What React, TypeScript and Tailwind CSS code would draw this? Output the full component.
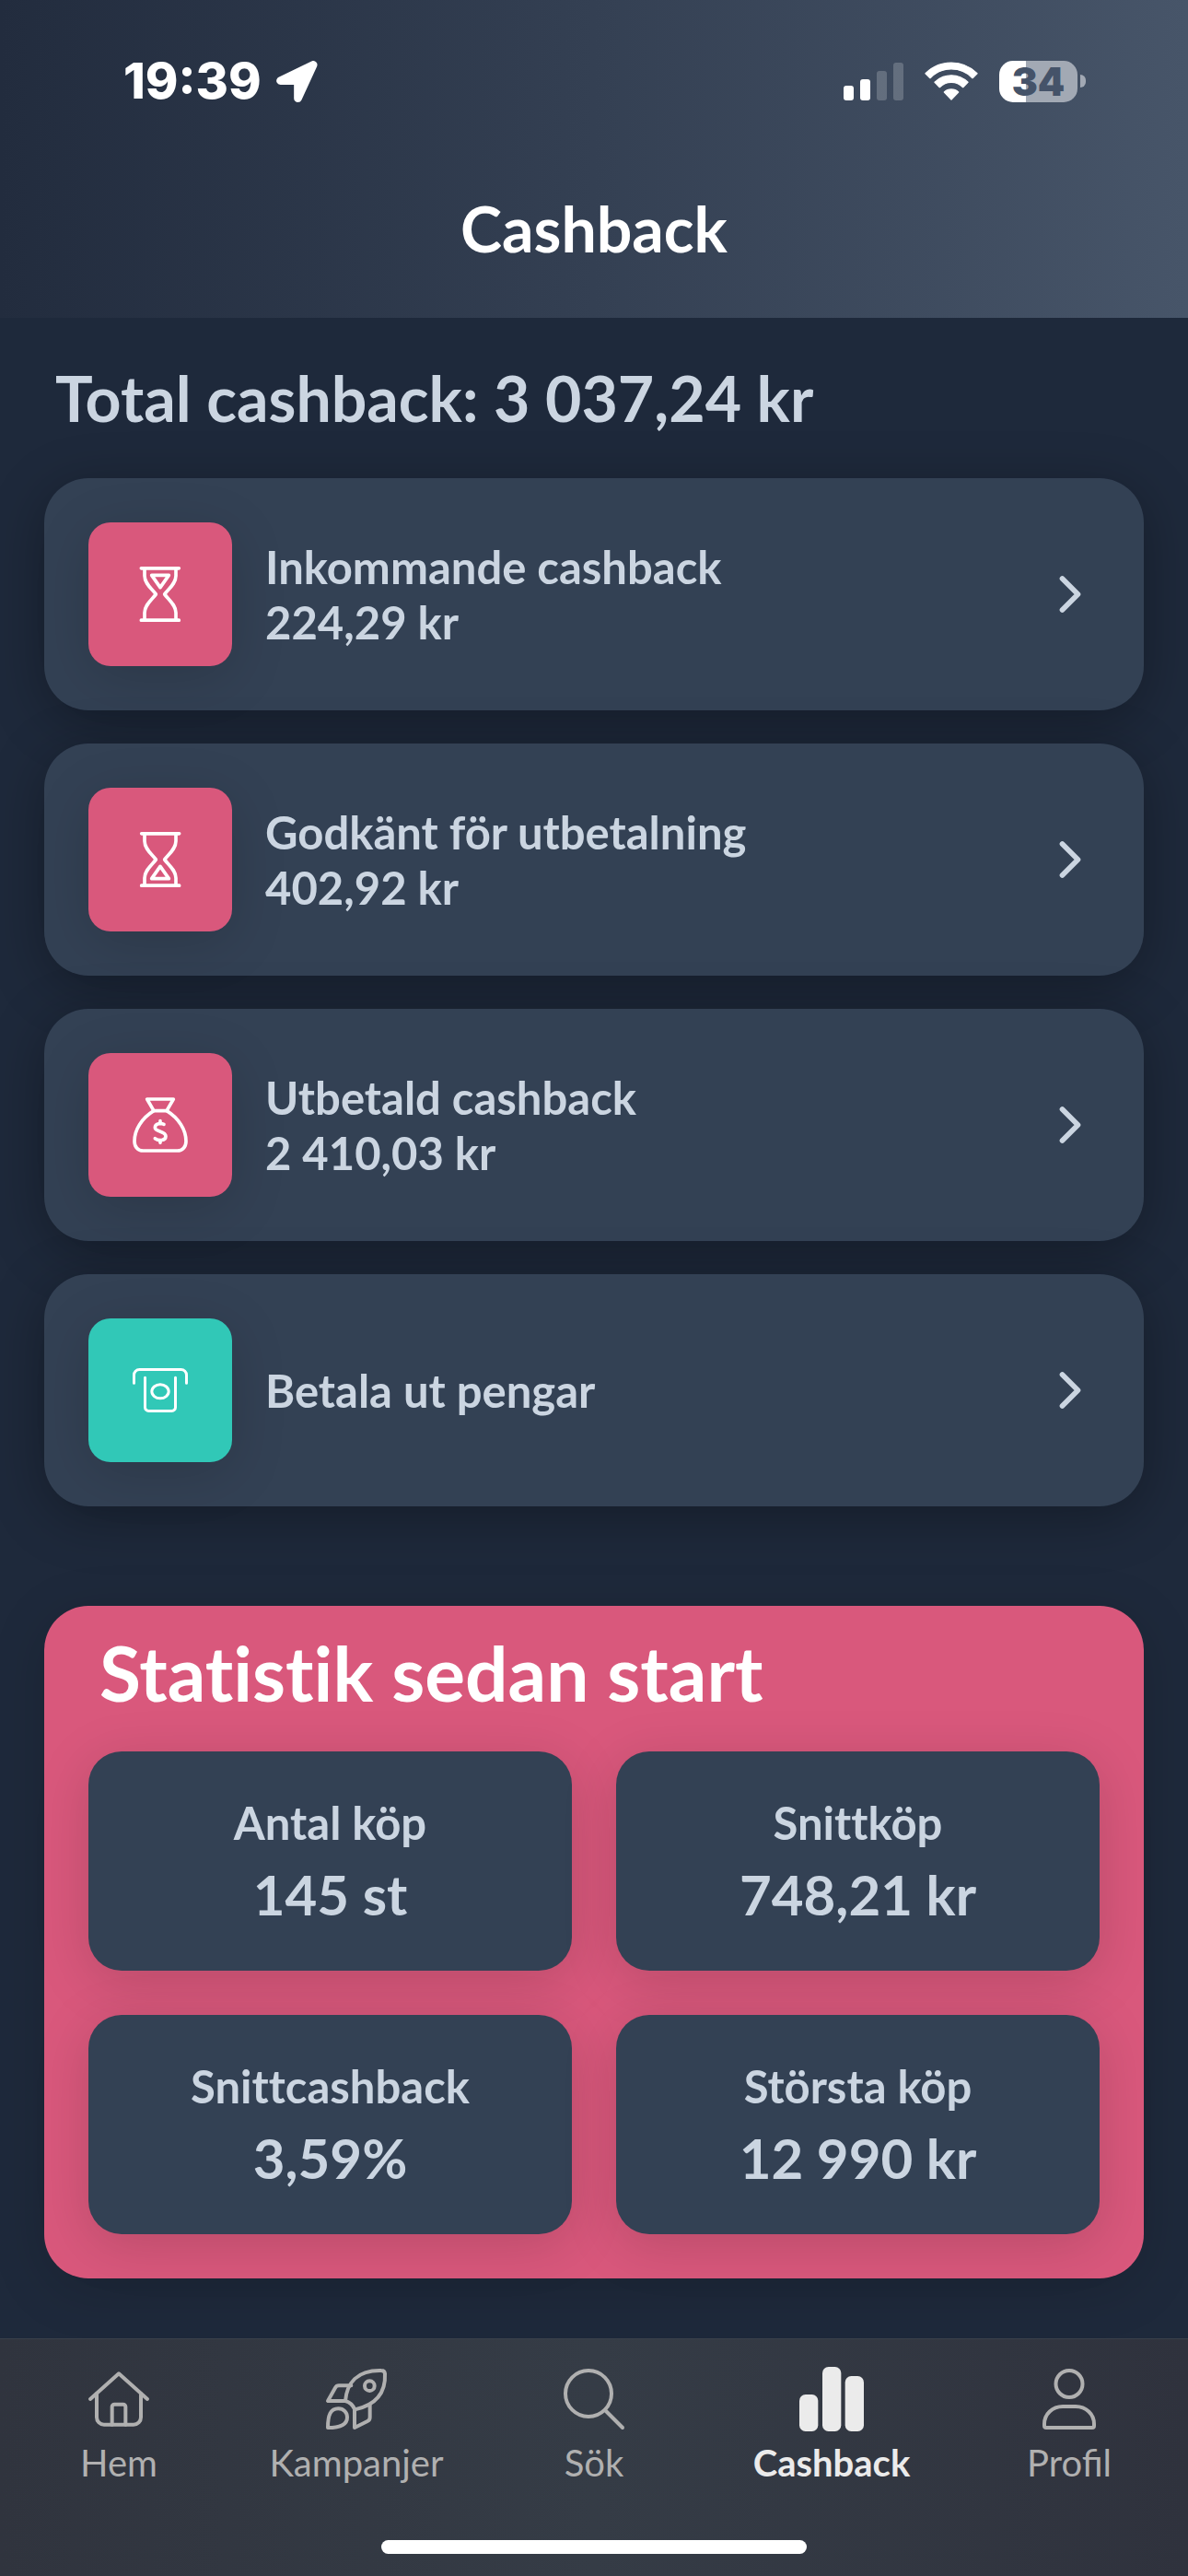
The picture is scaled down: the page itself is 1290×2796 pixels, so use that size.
import React from 'react';
import { ChevronRight } from 'lucide-react';

interface CashbackRow {
  title: string;
  amount?: string;
  icon: React.ReactNode;
  tone: 'pink' | 'teal';
}

interface Tab {
  label: string;
  icon: React.ReactNode;
  active?: boolean;
}

const HourglassIcon: React.FC<{ flipped?: boolean }> = ({ flipped }) => (
  <svg
    viewBox="0 0 180 180"
    className={`size-[60px] ${flipped ? 'rotate-180' : ''}`}
    fill="none"
    stroke="currentColor"
    strokeWidth="11"
    strokeLinecap="round"
    strokeLinejoin="round"
  >
    <path d="M29 5.5H152M29 174.5H152" />
    <path d="M39 6V30C39 55 62 72 76 90C62 108 39 125 39 150V174" />
    <path d="M141 6V30C141 55 118 72 104 90C118 108 141 125 141 150V174" />
    <path d="M90 112L62 152H118Z" />
  </svg>
);

const MoneyBagIcon = () => (
  <svg
    viewBox="0 0 180 180"
    className="size-[60px]"
    fill="none"
    stroke="currentColor"
    strokeWidth="11"
    strokeLinecap="round"
    strokeLinejoin="round"
  >
    <path d="M47 6H133L111 44H69Z" />
    <path d="M69 44C30 68 6 105 6 143C6 162 18 174 34 174H146C162 174 174 162 174 143C174 105 150 68 111 44" />
    <path d="M102 88C94 84 73 84 73 99C73 113 108 109 108 127C108 143 84 142 73 134M90 77V86M90 141V148" />
  </svg>
);

const PayoutIcon = () => (
  <svg
    viewBox="0 0 180 180"
    className="size-[60px]"
    fill="none"
    stroke="currentColor"
    strokeWidth="9"
    strokeLinecap="round"
    strokeLinejoin="round"
  >
    <path d="M4.5 67V41A18 18 0 0 1 22.5 22.5H157.5A18 18 0 0 1 175.5 41V67" />
    <path d="M40.5 49V145A12 12 0 0 0 52.5 157.5H127.5A12 12 0 0 0 139.5 145V49" />
    <ellipse cx="90" cy="94" rx="27.5" ry="22.5" />
  </svg>
);

const TabIcon: React.FC<{ children: React.ReactNode }> = ({ children }) => (
  <svg
    viewBox="0 0 198 198"
    className="size-[66px] overflow-visible"
    fill="none"
    stroke="currentColor"
    strokeWidth="12"
    strokeLinecap="round"
    strokeLinejoin="round"
  >
    {children}
  </svg>
);

const rows: CashbackRow[] = [
  { title: 'Inkommande cashback', amount: '224,29 kr', icon: <HourglassIcon flipped />, tone: 'pink' },
  { title: 'Godkänt för utbetalning', amount: '402,92 kr', icon: <HourglassIcon />, tone: 'pink' },
  { title: 'Utbetald cashback', amount: '2 410,03 kr', icon: <MoneyBagIcon />, tone: 'pink' },
  { title: 'Betala ut pengar', icon: <PayoutIcon />, tone: 'teal' },
];

const stats = [
  { label: 'Antal köp', value: '145 st' },
  { label: 'Snittköp', value: '748,21 kr' },
  { label: 'Snittcashback', value: '3,59%' },
  { label: 'Största köp', value: '12 990 kr' },
];

const tabs: Tab[] = [
  {
    label: 'Hem',
    icon: (
      <TabIcon>
        <path d="M6 99L99 16L192 99" />
        <path d="M27 82V158A24 24 0 0 0 51 182H147A24 24 0 0 0 171 158V82" />
        <path d="M77 182V124A8 8 0 0 1 85 116H113A8 8 0 0 1 121 124V182" />
      </TabIcon>
    ),
  },
  {
    label: 'Kampanjer',
    icon: (
      <TabIcon>
        <path d="M63 105C68 48 100 4 180 6Q191 6 192 16C195 78 162 118 94 133C88 120 78 109 63 105Z" />
        <circle cx="142" cy="56" r="16" />
        <path d="M82 55H42Q34 55 30 62L6 105H63" />
        <path d="M93 133V192L135 171Q143 167 143 158V118" />
        <path d="M6 192C6 150 15 130 40 130C58 130 69 143 69 158C69 180 50 192 6 192Z" />
      </TabIcon>
    ),
  },
  {
    label: 'Sök',
    icon: (
      <TabIcon>
        <circle cx="81" cy="81" r="75" />
        <path d="M135 135L192 192" />
      </TabIcon>
    ),
  },
  {
    label: 'Cashback',
    active: true,
    icon: (
      <TabIcon>
        <g fill="currentColor" stroke="none">
          <rect x="-6" y="84" width="61" height="120" rx="20" />
          <rect x="69" y="-6" width="61" height="210" rx="20" />
          <rect x="143" y="24" width="61" height="180" rx="20" />
        </g>
      </TabIcon>
    ),
  },
  {
    label: 'Profil',
    icon: (
      <TabIcon>
        <circle cx="99" cy="49.5" r="43.5" />
        <path d="M18 180C18 148 44 123 78 123H120C154 123 180 148 180 180V186A6 6 0 0 1 174 192H24A6 6 0 0 1 18 186Z" />
      </TabIcon>
    ),
  },
];

const StatusBar = () => (
  <div className="flex h-[176px] items-center justify-between pr-[111px] pl-[134px] font-['Inter',sans-serif]">
    <div className="flex items-center gap-4">
      <span className="text-[54px] leading-[60px] font-extrabold">19:39</span>
      {/* Location arrow */}
      <svg viewBox="0 0 134 135" className="size-[45px]" fill="currentColor" stroke="currentColor" strokeWidth="26" strokeLinejoin="round">
        <path d="M120 13L13 65H70V122Z" />
      </svg>
    </div>

    <div className="flex items-center">
      {/* Signal */}
      <svg viewBox="0 0 195 123" className="h-[41px] w-[65px]" fill="currentColor">
        <rect x="0" y="75" width="33" height="48" rx="9" />
        <rect x="54" y="54" width="33" height="69" rx="9" />
        <rect x="108" y="27" width="33" height="96" rx="9" opacity="0.2" />
        <rect x="162" y="0" width="33" height="123" rx="9" opacity="0.2" />
      </svg>

      {/* Wi-Fi */}
      <svg viewBox="0 0 174 126" className="ml-[23px] h-[42px] w-[58px]" fill="currentColor" stroke="currentColor" strokeWidth="4" strokeLinejoin="round">
        <path d="M3 38A119 119 0 0 1 171 38L156 53A96 96 0 0 0 18 53Z" />
        <path d="M33 67A76 76 0 0 1 141 67L125 83A53 53 0 0 0 49 83Z" />
        <path d="M64 99A33 33 0 0 1 110 99L87 123Z" />
      </svg>

      {/* Battery */}
      <div className="ml-[23px] flex items-center gap-[3px]">
        <div className="flex h-[45px] w-[85px] items-center justify-center rounded-[15px] bg-[linear-gradient(to_right,#fff_34%,#a2a9b4_34%)] text-[42px] leading-[45px] font-black text-[#455369]">
          34
        </div>
        <div className="h-[14px] w-[6px] rounded-r-full bg-[#a2a9b4]" />
      </div>
    </div>
  </div>
);

const RowCard: React.FC<{ row: CashbackRow }> = ({ row }) => (
  <button className="flex w-full items-center rounded-[48px] bg-[#334154] py-12 pr-[46px] pl-12 text-left shadow-[0_12px_60px_rgba(0,0,0,0.3)]">
    <span
      className={`flex size-[156px] items-center justify-center rounded-3xl text-white shadow-[0_12px_60px_rgba(0,0,0,0.15)] ${
        row.tone === 'pink' ? 'bg-[#d9587c]' : 'bg-[#31c8b7]'
      }`}
    >
      {row.icon}
    </span>
    <span className="ml-9 flex flex-1 flex-col text-[49px] leading-[60px] font-bold">
      <span>{row.title}</span>
      {row.amount && <span>{row.amount}</span>}
    </span>
    <ChevronRight className="size-[68px]" strokeWidth={2} />
  </button>
);

const App: React.FC = () => {
  return (
    <div className="flex min-h-screen flex-col bg-[#1e293b] font-['Lato',sans-serif] text-[#cbd5e1]">
      <header className="bg-linear-to-r from-[#222c3e] to-[#475569] text-white">
        <StatusBar />
        <h1 className="pt-8 pb-[57px] text-center text-[68px] leading-[80px] font-bold">Cashback</h1>
      </header>

      <main className="px-12 pt-[47px] pb-16 [font-variant-ligatures:none]">
        <h2 className="mb-[47px] px-3 text-[68px] leading-[80px] font-bold">Total cashback: 3 037,24 kr</h2>

        <div className="flex flex-col gap-9">
          {rows.map((row) => (
            <RowCard key={row.title} row={row} />
          ))}
        </div>

        {/* Statistics */}
        <section className="mt-[108px] rounded-[48px] bg-[#d9587c] px-12 pt-6 pb-12 shadow-[0_12px_60px_rgba(0,0,0,0.15)]">
          <h2 className="mb-[38px] px-3 text-[82px] leading-[96px] font-bold text-white">Statistik sedan start</h2>
          <div className="grid grid-cols-2 gap-12">
            {stats.map((stat) => (
              <div
                key={stat.label}
                className="flex flex-col items-center gap-3 rounded-[36px] bg-[#334154] py-[47px] shadow-[0_12px_60px_rgba(0,0,0,0.15)]"
              >
                <p className="text-[49px] leading-[60px] font-bold">{stat.label}</p>
                <p className="text-6xl leading-[72px] font-bold">{stat.value}</p>
              </div>
            ))}
          </div>
        </section>
      </main>

      {/* Bottom navigation */}
      <nav className="mt-auto border-t border-[#3a414b] bg-linear-to-r from-[#30343e] via-[#353c46] to-[#2f323d] pb-6">
        <div className="grid grid-cols-5 pt-8">
          {tabs.map((tab) => (
            <a
              key={tab.label}
              href="#"
              className={`flex flex-col items-center gap-3 text-[40px] leading-[48px] ${
                tab.active ? 'font-bold text-[#ebebeb]' : 'text-[#b0b0b0]'
              }`}
            >
              {tab.icon}
              {tab.label}
            </a>
          ))}
        </div>
        <div className="mx-auto mt-[60px] h-[15px] w-[462px] rounded-full bg-white" />
      </nav>
    </div>
  );
};

export default App;
